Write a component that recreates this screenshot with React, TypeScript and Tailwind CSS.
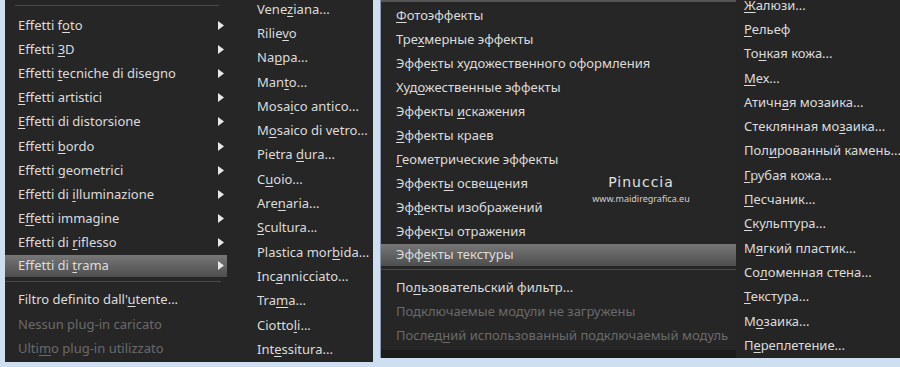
import React from "react";

const font = { fontFamily: '"Noto Sans", "Open Sans", sans-serif' };

function Label({ text }: { text: string }) {
  const i = text.indexOf("&");
  if (i < 0) return <>{text}</>;
  return (
    <>
      {text.slice(0, i)}
      <span className="underline underline-offset-[2px] decoration-1">{text[i + 1]}</span>
      {text.slice(i + 2)}
    </>
  );
}

function Arrow() {
  return (
    <svg width="6" height="9" viewBox="0 0 6 9" className="shrink-0">
      <path d="M0 0 L6 4.5 L0 9 Z" fill="#e8e8e8" />
    </svg>
  );
}

function Item({
  text,
  disabled,
  arrow,
  active,
  pl,
  h = "h-[24.2px]",
}: {
  text: string;
  disabled?: boolean;
  arrow?: boolean;
  active?: boolean;
  pl: string;
  h?: string;
}) {
  return (
    <div
      className={`${h} flex items-center pr-[3px] ${pl} whitespace-nowrap ${
        active ? "bg-gradient-to-b from-[#777777] to-[#4e4e4e]" : ""
      } ${disabled ? "text-[#6a6a6a]" : "text-[#dcdcdc]"}`}
    >
      <span className="flex-1">
        <Label text={text} />
      </span>
      {arrow && <Arrow />}
    </div>
  );
}

const leftMain = [
  "Effetti f&oto",
  "Effetti &3D",
  "Effetti &tecniche di disegno",
  "&Effetti artistici",
  "&Effetti di distorsione",
  "Effetti &bordo",
  "Effetti &geometrici",
  "Effetti di &illuminazione",
  "E&ffetti immagine",
  "Effetti di &riflesso",
];

const leftSub = [
  "Vene&ziana...",
  "Rilie&vo",
  "Na&ppa...",
  "Man&to...",
  "Mosa&ico antico...",
  "M&osaico di vetro...",
  "Pietra &dura...",
  "C&uoio...",
  "Are&naria...",
  "&Scultura...",
  "Plastica mor&bida...",
  "Inc&annicciato...",
  "Tra&ma...",
  "Ciotto&li...",
  "Int&essitura...",
];

const rightMain = [
  "&Фотоэффекты",
  "Тре&хмерные эффекты",
  "Эффе&кты художественного оформления",
  "Худ&ожественные эффекты",
  "Эффекты &искажения",
  "&Эффекты краев",
  "&Геометрические эффекты",
  "Эффект&ы освещения",
  "Эф&фекты изображений",
  "Эффек&ты отражения",
];

const rightSub = [
  "&Жалюзи...",
  "&Рельеф",
  "То&нкая кожа...",
  "&Мех...",
  "Атичн&ая мозаика...",
  "Стеклянная мо&заика...",
  "Пол&ированный камень...",
  "&Грубая кожа...",
  "&Песчаник...",
  "&Скульптура...",
  "М&ягкий пластик...",
  "Со&ломенная стена...",
  "&Текстура...",
  "М&озаика...",
  "П&ереплетение...",
];

export default function App() {
  return (
    <div
      className="w-[900px] h-[367px] bg-[#cddff1] flex overflow-hidden text-[13px] leading-none"
      style={font}
    >
      {/* Left screenshot */}
      <div className="ml-[5px] w-[368px] h-[362px] bg-[#262626] flex">
        <div className="w-[222px] flex flex-col">
          <div className="h-[13px] flex items-center pl-[10px] pr-[8px] pb-[2px]">
            <div className="h-px w-full bg-[#4a4a4a]" />
          </div>
          {leftMain.map((t) => (
            <Item key={t} text={t} arrow pl="pl-[13px]" />
          ))}
          <Item text="Effetti di &trama" arrow active pl="pl-[13px]" h="h-[22px]" />
          <div className="h-[11px] flex items-center pr-[6px] pb-[1px]">
            <div className="h-px w-full bg-[#4a4a4a]" />
          </div>
          <Item text="Filtro definito dall'&utente..." pl="pl-[13px]" />
          <Item text="Nessun plug-in caricato" disabled pl="pl-[13px]" />
          <Item text="Ulti&mo plug-in utilizzato" disabled pl="pl-[13px]" />
        </div>
        <div className="flex-1 flex flex-col -mt-[3px] overflow-hidden">
          {leftSub.map((t) => (
            <Item key={t} text={t} pl="pl-[30px]" h="h-[24.3px]" />
          ))}
        </div>
      </div>

      {/* Right screenshot */}
      <div className="ml-[7px] w-[520px] h-[358px] flex border-l border-[#8a9aac] relative">
        <div className="w-[355px] h-full bg-[#262626] border-t-[2px] border-[#555555] flex flex-col">
          <div className="h-[1px]" />
          {rightMain.map((t) => (
            <Item key={t} text={t} pl="pl-[15px]" h="h-[24.1px]" />
          ))}
          <Item text="Эфф&екты текстуры" active pl="pl-[15px]" h="h-[22px]" />
          <div className="h-[9px] flex items-center pb-[1px]">
            <div className="h-px w-full bg-[#4a4a4a]" />
          </div>
          <Item text="По&льзовательский фильтр..." pl="pl-[15px]" />
          <Item text="Подключаемые модули не загружены" disabled pl="pl-[15px]" />
          <Item text="Послед&ний использованный подключаемый модуль" disabled pl="pl-[15px]" />
          <div className="flex-1" />
          <div className="h-[8px] bg-[#1b1b1b]" />
        </div>
        <div className="flex-1 h-full bg-[#252525] flex flex-col overflow-hidden">
          <div className="-mt-[7px] flex flex-col">
            {rightSub.map((t) => (
              <Item key={t} text={t} pl="pl-[8px]" h="h-[24.3px]" />
            ))}
          </div>
        </div>

        <div className="absolute left-[205px] top-[175px] w-[110px] flex flex-col items-center text-[#e0e0e0]">
          <div className="text-[14px] tracking-[1px]" style={{ fontFamily: '"DejaVu Sans", sans-serif' }}>
            Pinuccia
          </div>
          <div className="text-[9px] mt-[5px] text-[#d0d0d0]">www.maidiregrafica.eu</div>
        </div>
      </div>
    </div>
  );
}
